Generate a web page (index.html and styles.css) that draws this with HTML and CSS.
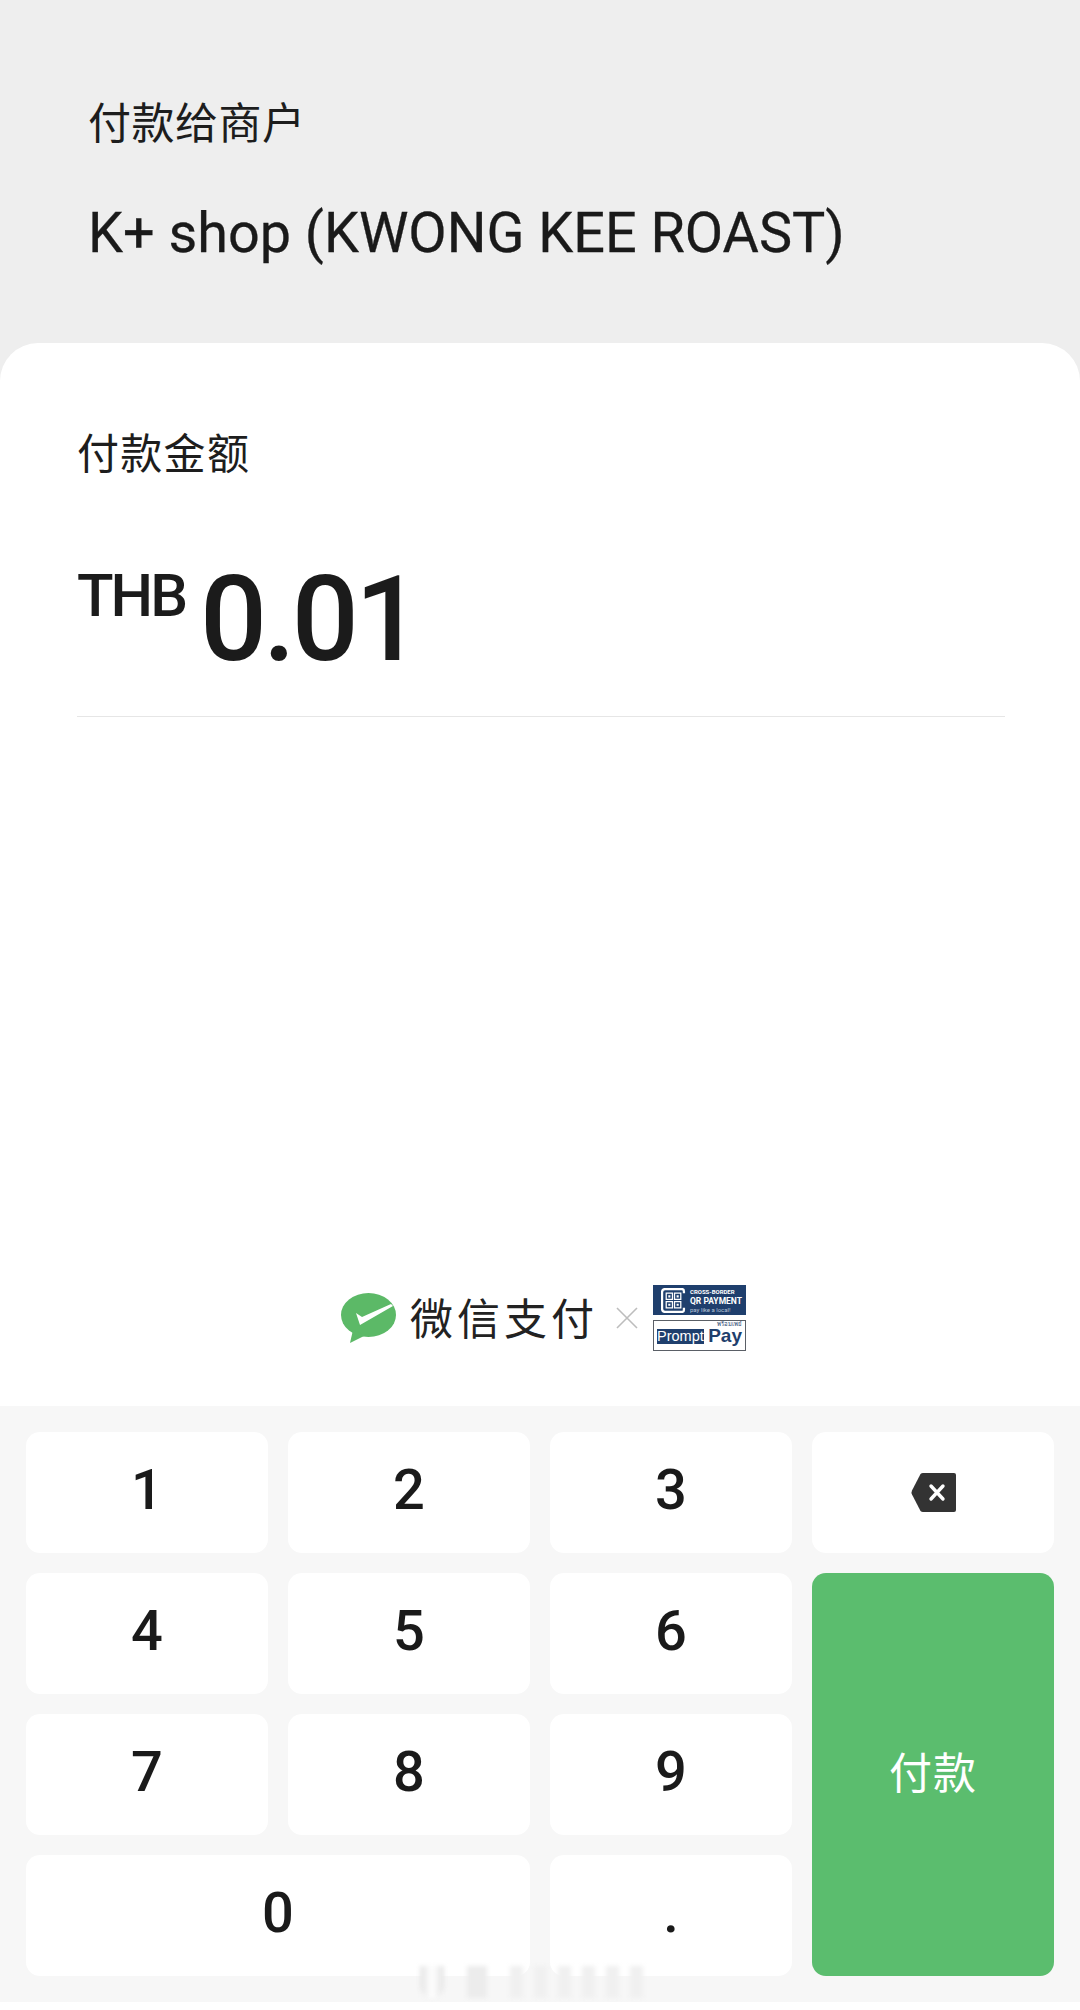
FILE: index.html
```html
<!DOCTYPE html>
<html>
<head>
<meta charset="UTF-8">
<title>付款</title>
<link rel="stylesheet" href="styles.css">
</head>
<body>
<div class="page">
  <div class="merchant">
    <div class="merchant-label">付款给商户</div>
    <div class="merchant-name">K+ shop (KWONG KEE ROAST)</div>
  </div>

  <div class="sheet">
    <div class="amount-label">付款金额</div>
    <div class="amount">
      <span class="currency">THB</span>
      <span class="value">0.01</span>
    </div>
    <div class="divider"></div>

    <div class="brand">
      <svg class="wechat-logo" viewBox="0 0 55 50">
        <ellipse cx="27.5" cy="22" rx="27.5" ry="22" fill="#5cb967"/>
        <path d="M12 37 L9 50 L25 42 Z" fill="#5cb967"/>
        <path d="M15 20 L21 24 L50 11 L52 13 L19 32 Z" fill="#fff"/>
      </svg>
      <span class="brand-name">微信支付</span>
      <svg class="brand-x" viewBox="0 0 22 22">
        <path d="M1 1 L21 21 M21 1 L1 21" stroke="#bdbdbd" stroke-width="1.6" fill="none"/>
      </svg>
      <div class="partner">
        <div class="qr-badge">
          <svg class="qr-icon" viewBox="0 0 24 24">
            <path d="M22 5 V3 Q22 1 20 1 H4 Q1 1 1 4 V20 Q1 23 4 23 H20 Q22 23 22 21 V19" stroke="#fff" stroke-width="2.2" fill="none"/>
            <path d="M5 5 H11 V11 H5 Z M5 13 H11 V19 H5 Z M13 5 H19 V11 H13 Z M13 13 H19 V19 H13 Z" stroke="#fff" stroke-width="1.2" fill="none"/>
            <path d="M7 7 H9 V9 H7 Z M7 15 H9 V17 H7 Z M15 7 H17 V9 H15 Z M15 15 H17 V17 H15 Z" fill="#fff"/>
          </svg>
          <div class="qr-text">
            <div class="qr-line-a">CROSS-BORDER</div>
            <div class="qr-line-b">QR PAYMENT</div>
            <div class="qr-line-c">pay like a local!</div>
          </div>
        </div>
        <div class="pp-badge">
          <div class="pp-thai">พร้อมเพย์</div>
          <div class="pp-row">
            <span class="pp-prompt">Prompt</span>
            <span class="pp-pay">Pay</span>
          </div>
        </div>
      </div>
    </div>
  </div>

  <div class="keypad">
    <div class="key">1</div>
    <div class="key">2</div>
    <div class="key">3</div>
    <div class="key">
      <svg class="backspace" viewBox="0 0 45 39">
        <path d="M12 0 H43 Q45 0 45 2 V37 Q45 39 43 39 H12 Q10.500 39 9.500 38 L1 21.500 Q0 19.500 1 17.500 L9.500 1 Q10.500 0 12 0 Z" fill="#333"/>
        <path d="M20 13 L32 26 M32 13 L20 26" stroke="#fff" stroke-width="3.4" stroke-linecap="round" fill="none"/>
      </svg>
    </div>
    <div class="key">4</div>
    <div class="key">5</div>
    <div class="key">6</div>
    <div class="key key-pay">付款</div>
    <div class="key">7</div>
    <div class="key">8</div>
    <div class="key">9</div>
    <div class="key key-zero">0</div>
    <div class="key">.</div>
  </div>
  <div class="page-end"></div>

  <div class="smear">
    <span class="smear-pill"></span>
    <span class="smear-wide"></span>
    <span class="smear-bar"></span>
    <span class="smear-bar"></span>
    <span class="smear-bar"></span>
    <span class="smear-bar"></span>
    <span class="smear-bar"></span>
    <span class="smear-bar"></span>
  </div>
</div>
</body>
</html>
```

FILE: styles.css
```css
html, body {
  margin: 0;
  padding: 0;
  background: #fff;
}

body {
  font-family: "Noto Sans CJK SC", "Liberation Sans", sans-serif;
  color: #1d1d1d;
}

.page {
  position: relative;
  width: 1080px;
  height: 2010px;
  overflow: hidden;
  display: flex;
  flex-direction: column;
  background: #eee;
}

/* top grey area */
.merchant {
  height: 343px;
  box-sizing: border-box;
  padding: 90px 0 0 88px;
}

.merchant-label {
  font-size: 43px;
  line-height: 60px;
  letter-spacing: 0.500px;
}

.merchant-name {
  margin-top: 48px;
  font-family: Roboto, sans-serif;
  font-size: 55.750px;
  line-height: 70px;
  -webkit-text-stroke: 0.3px #1a1a1a;
  color: #1a1a1a;
}

/* white sheet */
.sheet {
  flex: 1;
  background: #fff;
  border-radius: 38px 38px 0 0;
  padding: 78px 75px 0 77px;
  display: flex;
  flex-direction: column;
}

.amount-label {
  font-size: 42px;
  line-height: 60px;
  letter-spacing: 1.300px;
}

.amount {
  display: flex;
  align-items: flex-start;
  margin-top: 80px;
  font-family: Roboto, sans-serif;
  font-weight: 500;
  color: #1b1b1b;
}

.currency {
  font-size: 60px;
  line-height: 70px;
  letter-spacing: -3px;
}

.value {
  margin-top: -6px;
  margin-left: 15px;
  font-size: 118px;
  line-height: 130px;
  letter-spacing: -4px;
}

.divider {
  margin-top: 31px;
  height: 1px;
  background: #e6e6e6;
}

/* wechat pay x promptpay row */
.brand {
  margin-top: auto;
  margin-bottom: 55px;
  margin-left: 264px;
  display: flex;
  align-items: center;
}

.wechat-logo {
  width: 55px;
  height: 50px;
}

.brand-name {
  margin: -4px 0 0 14px;
  font-size: 43px;
  line-height: 50px;
  letter-spacing: 4px;
  color: #222;
}

.brand-x {
  margin-left: 18px;
  width: 22px;
  height: 22px;
}

.partner {
  margin-left: 15px;
  width: 93px;
  display: flex;
  flex-direction: column;
  gap: 5px;
}

.qr-badge {
  height: 30px;
  background: #1f3f6d;
  display: flex;
  align-items: center;
  padding-left: 8px;
  gap: 4px;
  overflow: hidden;
  color: #fff;
  font-family: Roboto, sans-serif;
  font-weight: 700;
}

.qr-icon {
  width: 25px;
  height: 25px;
  flex: none;
}

.qr-line-a {
  font-size: 6px;
  line-height: 8px;
  white-space: nowrap;
}

.qr-line-b {
  font-size: 8.500px;
  line-height: 10px;
  white-space: nowrap;
}

.qr-line-c {
  font-size: 6px;
  line-height: 7px;
  font-weight: 400;
  white-space: nowrap;
  color: #b9c6d8;
}

.pp-badge {
  height: 31px;
  box-sizing: border-box;
  border: 1.500px solid #5a5f66;
  background: #fff;
  font-family: "Liberation Sans", sans-serif;
  padding: 0 3px;
}

.pp-thai {
  font-size: 6px;
  line-height: 7px;
  text-align: right;
  color: #1f3f6d;
}

.pp-row {
  display: flex;
  align-items: center;
  justify-content: space-between;
}

.pp-prompt {
  background: #1f3f6d;
  color: #fff;
  font-size: 14.500px;
  line-height: 15px;
}

.pp-pay {
  color: #1f3f6d;
  font-size: 19px;
  line-height: 16px;
  font-weight: bold;
}

/* keypad */
.keypad {
  background: #f7f7f7;
  padding: 26px;
  display: grid;
  grid-template-columns: repeat(4, 242px);
  grid-auto-rows: 121px;
  gap: 20px;
}

.key {
  background: #fff;
  border-radius: 14px;
  display: flex;
  align-items: center;
  justify-content: center;
  padding-bottom: 6px;
  box-sizing: border-box;
  font-family: Roboto, sans-serif;
  font-weight: 500;
  font-size: 56px;
  color: #1a1a1a;
}

.key-zero {
  grid-column: span 2;
}

.key-pay {
  grid-column: 4;
  grid-row: 2 / span 3;
  background: #5bbd6e;
  color: #fff;
  padding: 0 0 10px;
  font-family: "Noto Sans CJK SC", sans-serif;
  font-weight: 400;
  font-size: 43px;
  letter-spacing: 1px;
}

.backspace {
  width: 45px;
  height: 39px;
  margin-top: 6px;
}

.page-end {
  flex: none;
  height: 8px;
  background: #fff;
}

/* smudge left over the bottom of the keys */
.smear {
  position: absolute;
  left: 420px;
  top: 1966px;
  height: 32px;
  display: flex;
  gap: 11px;
  filter: blur(2px);
}

.smear-pill {
  width: 24px;
  margin-right: 12px;
  background: linear-gradient(90deg, #e4e4e4, #fff 50%, #e4e4e4);
  border-radius: 0 0 12px 12px;
}

.smear-wide {
  width: 20px;
  margin-right: 12px;
  background: #ececec;
}

.smear-bar {
  width: 13px;
  background: #f0f0f0;
}
```
